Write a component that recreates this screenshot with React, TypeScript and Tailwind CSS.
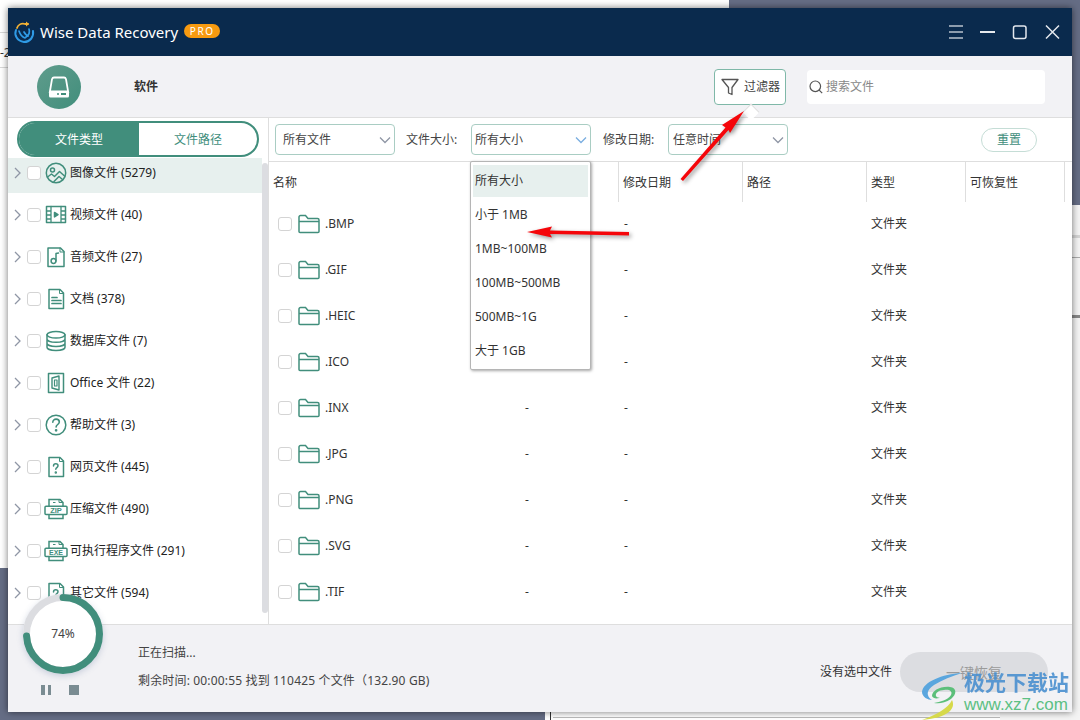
import React from "react";

const G = "#418e7c";

function Svg({ children, w = 22, h = 22, vb = "0 0 22 22" }: { children: React.ReactNode; w?: number; h?: number; vb?: string }) {
  return (
    <svg width={w} height={h} viewBox={vb} fill="none" stroke={G} strokeWidth={1.5} strokeLinecap="round" strokeLinejoin="round" className="shrink-0">
      {children}
    </svg>
  );
}

const Doc = ({ children }: { children?: React.ReactNode }) => (
  <>
    <path d="M4 1.5h11l3.5 3.5v15.5H4z" />
    <path d="M14.5 1.5v4h4" strokeWidth={1} />
    {children}
  </>
);

const icons: Record<string, React.ReactNode> = {
  image: (
    <Svg>
      <circle cx="11" cy="11" r="9.7" />
      <circle cx="7.5" cy="8" r="2" />
      <path d="M2.5 15l4-3 3 2.5 5-5 5 4.5M9 19.5l5-5 3.5 3" />
    </Svg>
  ),
  video: (
    <Svg>
      <rect x="1.5" y="2.5" width="19" height="16" />
      <path d="M6 2.5v16M16 2.5v16M1.5 7h4.5M1.5 11h4.5M1.5 15h4.5M16 7h4.5M16 11h4.5M16 15h4.5" strokeWidth={1.3} />
      <path d="M9.5 8.5l3.5 2.2-3.5 2.2z" fill={G} />
    </Svg>
  ),
  audio: (
    <Svg>
      <path d="M3 2h12.5l3.5 3.5V20.5H3z" />
      <path d="M15 2v4h4" strokeWidth={1} />
      <circle cx="8.5" cy="15" r="2.4" />
      <path d="M11 15V7.5l2.5-.5" />
    </Svg>
  ),
  doc: (
    <Svg>
      <Doc>
        <path d="M7 9.5h5M7 12.5h9M7 15.5h9" strokeWidth={1.7} />
      </Doc>
    </Svg>
  ),
  db: (
    <Svg>
      <ellipse cx="11" cy="4.8" rx="9" ry="3.3" />
      <path d="M2 4.8v12.4c0 1.9 4 3.3 9 3.3s9-1.4 9-3.3V4.8M2 9c0 1.9 4 3.3 9 3.3S20 10.9 20 9M2 13.2c0 1.9 4 3.3 9 3.3s9-1.4 9-3.3" />
    </Svg>
  ),
  office: (
    <Svg>
      <path d="M3.5 1.5h15v19h-15z" />
      <path d="M7 6l7-2v14l-7-2z" strokeWidth={1.4} />
      <path d="M9.5 8h2.500v6H9.500z" strokeWidth={1.2} />
    </Svg>
  ),
  help: (
    <Svg>
      <circle cx="11" cy="11" r="9.8" />
      <path d="M7.8 8.3c0-1.900 1.500-3.200 3.300-3.200s3.200 1.200 3.200 2.900c0 2.400-3.200 2.600-3.200 5" strokeWidth={1.6} />
      <circle cx="11.1" cy="16.3" r=".6" fill={G} />
    </Svg>
  ),
  web: (
    <Svg>
      <Doc>
        <path d="M8.5 10c0-1.400 1-2.200 2.300-2.200s2.200.9 2.200 2c0 1.700-2.200 1.800-2.200 3.400" />
        <circle cx="10.8" cy="16.4" r=".5" fill={G} />
      </Doc>
    </Svg>
  ),
  zip: (
    <svg width="24" height="22" viewBox="0 0 24 22" fill="none" stroke={G} strokeWidth={1.5} className="shrink-0">
      <path d="M5 8V1.500h11l3 3V8M5 16.500v4h14v-4" />
      <path d="M9 4.500h2.500M15 1.500v3h4" strokeWidth={1} />
      <rect x="1" y="8.200" width="22" height="8.300" rx="1" />
      <text x="12" y="15" textAnchor="middle" fontSize="7.5" fontWeight="700" fill={G} stroke="none" fontFamily="'Liberation Sans',sans-serif">ZIP</text>
    </svg>
  ),
  exe: (
    <svg width="24" height="22" viewBox="0 0 24 22" fill="none" stroke={G} strokeWidth={1.5} className="shrink-0">
      <path d="M5 8V1.500h11l3 3V8M5 16.500v4h14v-4" />
      <path d="M9 4.500h2.500M15 1.500v3h4" strokeWidth={1} />
      <rect x="1" y="8.200" width="22" height="8.300" rx="1" />
      <text x="12" y="15" textAnchor="middle" fontSize="7" fontWeight="700" fill={G} stroke="none" fontFamily="'Liberation Sans',sans-serif">EXE</text>
    </svg>
  ),
};

const sideItems = [
  ["image", "图像文件 (5279)"],
  ["video", "视频文件 (40)"],
  ["audio", "音频文件 (27)"],
  ["doc", "文档 (378)"],
  ["db", "数据库文件 (7)"],
  ["office", "Office 文件 (22)"],
  ["help", "帮助文件 (3)"],
  ["web", "网页文件 (445)"],
  ["zip", "压缩文件 (490)"],
  ["exe", "可执行程序文件 (291)"],
  ["web", "其它文件 (594)"],
];

const rowsData = [".BMP", ".GIF", ".HEIC", ".ICO", ".INX", ".JPG", ".PNG", ".SVG", ".TIF"];
const sizes = ["所有大小", "小于 1MB", "1MB~100MB", "100MB~500MB", "500MB~1G", "大于 1GB"];

function Chevron({ color = "#8f96a5", size = 12 }: { color?: string; size?: number }) {
  return (
    <svg width={size} height={size} viewBox="0 0 12 12" fill="none" stroke={color} strokeWidth={1.3} className="shrink-0">
      <path d="M1 3.500l5 5 5-5" />
    </svg>
  );
}

function Select({ label, pad, chevron }: { label: string; pad: string; chevron?: string }) {
  return (
    <div className={`${pad} w-[120px] h-[31px] flex items-center justify-between pr-[3px] bg-white rounded-[4px] border border-[#a9cdc3] text-[#444]`}>
      <span>{label}</span>
      <Chevron color={chevron} />
    </div>
  );
}

function Check() {
  return <span className="block w-[14px] h-[14px] shrink-0 rounded-[3px] border border-[#d4d4d4] bg-white" />;
}

export default function App() {
  return (
    <div className="relative w-[1080px] h-[720px] overflow-hidden bg-[#656d85] p-2 font-['Noto_Sans','Noto_Sans_CJK_SC',sans-serif] text-[12px] text-[#222]">
      {/* desktop windows behind */}
      <div className="absolute left-0 top-0 w-[729px] h-[568px] bg-white">
        <div className="absolute left-0 top-[32px] w-full h-px bg-[#d8d8d8]" />
        <div className="absolute left-0 top-[67px] w-full h-px bg-[#d8d8d8]" />
        <span className="absolute left-0 top-[44px] text-[#333]">-2</span>
      </div>
      <div className="absolute left-[545px] top-[600px] w-[535px] h-[120px] bg-white">
        <div className="absolute left-[5px] top-[100px] h-[20px] w-px bg-[#333]" />
        <div className="absolute left-[8px] top-[117px] w-full h-px bg-[#bbb]" />
      </div>
      <div className="absolute left-[1000px] top-[205px] w-[80px] h-[520px] bg-[#f4f4f4]">
        <div className="absolute left-0 top-[30px] w-full h-[3px] bg-[#d4d4d4]" />
        <div className="absolute left-0 top-[52px] w-full h-px bg-[#aaa]" />
        <div className="absolute left-0 top-[110px] w-full h-[3px] bg-[#888]" />
      </div>

      {/* app window */}
      <div className="relative flex flex-col w-[1064px] h-[704px] bg-white shadow-[0_0_7px_rgba(0,0,0,0.55)]">
        {/* title bar */}
        <header className="flex items-center h-[48px] bg-[#0a2a4d] text-white shrink-0">
          <svg width="22" height="24" viewBox="0 0 22 24" fill="none" className="ml-[5px] shrink-0" strokeLinecap="round">
            <path d="M3 10c-2 5 1 11 8 12 6 0 10-5 9-11" stroke="#2f9be6" strokeWidth="2" />
            <path d="M6 11c1 3 3 6 6 7M11 12c1 2 2 3 4 4M16 9c1 3 0 6-3 8" stroke="#2f9be6" strokeWidth="1.7" />
            <path d="M4 8c1-3 4-5 8-4h3" stroke="#f5b335" strokeWidth="1.8" />
            <path d="M13 1.500l3 2.500-3 2.500z" fill="#f5b335" />
          </svg>
          <span className="ml-[5px] text-[15px] leading-none">Wise Data Recovery</span>
          <span className="ml-[6px] w-[36px] h-[14px] -mt-[3px] flex items-center justify-center rounded-full bg-[#f79a10] text-[10px] tracking-[1.5px] leading-none">PRO</span>
          <div className="flex-1" />
          <svg width="112" height="16" viewBox="0 0 112 16" fill="none" stroke="#e4e8ee" strokeWidth="1.5" className="mr-[11px] shrink-0">
            <path d="M0 2h14M0 8h14M0 14h14" stroke="#b9c2cd" />
            <path d="M31 8h15" stroke="#fff" strokeWidth="1.8" />
            <rect x="64.5" y="2" width="12.5" height="12.5" rx="2" />
            <path d="M97 1.500l13 13M110 1.500l-13 13" />
          </svg>
        </header>

        {/* toolbar */}
        <div className="flex items-center h-[62px] shrink-0 bg-[#f2f2f5] border-b border-[#dedede]">
          <div className="ml-[29px] w-[44px] h-[44px] rounded-full flex items-center justify-center bg-gradient-to-br from-[#5f9c8c] to-[#418e7c]">
            <svg width="24" height="24" viewBox="0 0 24 24" className="shrink-0">
              <path d="M7 2.500h10c1 0 1.700.7 2 1.700l2.200 13H2.800L5 4.200c.3-1 1-1.700 2-1.700z" fill="none" stroke="#fff" strokeWidth="1.800" />
              <rect x="2" y="15.500" width="20" height="7" rx="1.500" fill="#fff" />
              <circle cx="11" cy="19" r="1" fill="#418e7c" />
              <rect x="14" y="18" width="5" height="2" fill="#418e7c" />
            </svg>
          </div>
          <span className="ml-[53px] pt-px font-bold text-[#333]">软件</span>
          <div className="flex-1" />
          <div className="relative flex items-center w-[72px] h-[36px] bg-white rounded-[4px] border border-[#7fb8a8]">
            <svg width="18" height="18" viewBox="0 0 18 18" fill="none" stroke="#555" strokeWidth="1.300" strokeLinejoin="round" className="ml-[6px] shrink-0">
              <path d="M1 1.500h16L11 9.500v7l-3.500-1.500V9.500z" />
            </svg>
            <span className="ml-[5px] pt-px text-[#444]">过滤器</span>
            <span className="absolute left-[30px] top-[36px] w-[12px] h-[12px] rotate-45 bg-white border-l border-t border-[#dedede]" />
          </div>
          <div className="ml-[21px] mr-[27px] flex items-center w-[238px] h-[34px] bg-white rounded-[4px] text-[#888]">
            <svg width="14" height="14" viewBox="0 0 14 14" fill="none" stroke="#555" strokeWidth="1.200" className="ml-[2px] shrink-0">
              <circle cx="6.300" cy="6.300" r="5.300" />
              <path d="M10.200 10.200l3 3" />
            </svg>
            <span className="ml-[3px] pt-px">搜索文件</span>
          </div>
        </div>

        {/* main */}
        <div className="flex flex-1 min-h-0">
          {/* sidebar */}
          <aside className="relative w-[261px] shrink-0 border-r border-[#dedede] overflow-hidden">
            <div className="flex h-[36px] mt-[3px] mx-[9px] w-[242px] rounded-full border-2 border-[#418e7c] overflow-hidden">
              <div className="w-[120px] pt-px flex items-center justify-center bg-[#418e7c] text-white">文件类型</div>
              <div className="flex-1 pt-px flex items-center justify-center text-[#418e7c]">文件路径</div>
            </div>
            <div className="flex mt-px">
              <ul className="w-[254px]">
                {sideItems.map(([ic, label], i) => (
                  <li key={label} className={i === 0 ? "flex items-center h-[35px] pb-[5px] mb-px pl-[6px] bg-[#e7f0ee]" : "flex items-center h-[42px] pl-[6px]"}>
                    <svg width="8" height="12" viewBox="0 0 8 12" fill="none" stroke="#8f96a5" strokeWidth="1.300" className="shrink-0">
                      <path d="M1 1l5 5-5 5" />
                    </svg>
                    <span className="ml-[5px]"><Check /></span>
                    <span className="ml-[4px] flex w-[22px] justify-center">{icons[ic]}</span>
                    <span className="ml-[3px] whitespace-nowrap">{label}</span>
                  </li>
                ))}
              </ul>
              <div className="w-[6px] h-[450px] mt-[5px] rounded-full bg-[#dcdde1]" />
            </div>
          </aside>

          {/* content */}
          <section className="relative flex-1 min-w-0">
            <div className="flex items-center h-[44px] border-b border-[#dedede] pl-[6px]">
              <Select label="所有文件" pad="pl-[7px]" />
              <span className="ml-[11px] w-[65px] text-[#444]">文件大小:</span>
              <Select label="所有大小" pad="pl-[3px]" chevron="#7aaee0" />
              <span className="ml-[12px] w-[65px] text-[#444]">修改日期:</span>
              <Select label="任意时间" pad="pl-[4px]" />
              <div className="ml-[193px] w-[56px] h-[24px] flex items-center justify-center rounded-full bg-white border border-[#c5ddd6] text-[#418e7c]">重置</div>
            </div>

            <div className="grid grid-cols-[201px_149px_124px_124px_99px_99px] h-[40px] items-stretch text-[#333]">
              <div className="flex items-center pl-[4px] pt-px">名称</div>
              <div className="border-r border-[#dedede]" />
              {["修改日期", "路径", "类型", "可恢复性"].map((h) => (
                <div key={h} className="flex items-center pl-[4px] pt-px border-r border-[#dedede]">{h}</div>
              ))}
            </div>

            {rowsData.map((name) => (
              <div key={name} className="grid grid-cols-[201px_149px_124px_124px_99px_99px] h-[46px] pb-[2px] items-center text-[#333]">
                <div className="flex items-center pl-[9px]">
                  <Check />
                  <svg width="22" height="20" viewBox="0 0 22 20" fill="none" stroke={G} strokeWidth="1.500" className="ml-[6px] shrink-0">
                    <path d="M1 3a1.500 1.500 0 0 1 1.500-1.500h5L10 4.500h9.500A1.500 1.500 0 0 1 21 6v11.500a1 1 0 0 1-1 1H2a1 1 0 0 1-1-1z" />
                    <path d="M1 7.500h20" />
                  </svg>
                  <span className="ml-[5px]">{name}</span>
                </div>
                <div className="pl-[55px]">-</div>
                <div className="pl-[5px]">-</div>
                <div />
                <div className="pl-[4px]">文件夹</div>
                <div />
              </div>
            ))}

            {/* dropdown */}
            <div className="absolute left-[201px] top-[43px] w-[121px] h-[209px] p-[2px] pt-[3px] bg-white border border-[#b5b5b5] rounded-[2px] shadow-[1px_1px_3px_rgba(0,0,0,0.35)] text-[#333]">
              {sizes.map((s, i) => (
                <div key={s} className={i === 0 ? "flex items-center h-[32px] mb-[2px] pl-[2px] bg-[#e7f0ee]" : "flex items-center h-[32px] mb-[2px] pl-[2px]"}>{s}</div>
              ))}
            </div>
          </section>
        </div>

        {/* footer */}
        <footer className="relative flex items-center h-[88px] shrink-0 bg-[#f2f2f5] border-t border-[#dedede] text-[#444]">
          <div className="absolute left-[15px] top-[-31px] w-[80px] h-[80px] flex items-center justify-center rounded-full bg-white shadow-[0_2px_6px_rgba(100,120,160,0.3)]">
            <svg width="80" height="80" viewBox="0 0 80 80" fill="none" strokeWidth="7" className="absolute left-0 top-0">
              <circle cx="40" cy="40" r="36.500" stroke="#dcdde1" />
              <circle cx="40" cy="40" r="36.500" stroke={G} strokeDasharray="169.700 229.300" strokeLinecap="round" transform="rotate(-90 40 40)" />
            </svg>
            <span className="relative text-[#444]">74%</span>
          </div>
          <div className="absolute left-[33px] top-[60px] flex items-center">
            <span className="block w-[3.500px] h-[10px] bg-[#7a8c92]" />
            <span className="block ml-[3px] w-[3.500px] h-[10px] bg-[#7a8c92]" />
            <span className="block ml-[18px] w-[10px] h-[10px] bg-[#7a8c92]" />
          </div>
          <div className="ml-[130px] flex flex-col gap-[11px] mt-[-4px]">
            <span className="leading-[17px]">正在扫描...</span>
            <span className="leading-[17px] tracking-[0.16px]">剩余时间: 00:00:55 找到 110425 个文件（132.90 GB)</span>
          </div>
          <div className="flex-1" />
          <span className="text-[#333] mt-[7px]">没有选中文件</span>
          <div className="ml-[8px] mr-[24px] mt-[7px] w-[148px] h-[40px] flex items-center justify-center rounded-[20px] bg-[#dcdde1] text-[14px] text-[#9a9a9a]">一键恢复</div>
        </footer>
      </div>

      {/* annotation arrows */}
      <svg width="1080" height="720" viewBox="0 0 1080 720" className="absolute left-0 top-0 pointer-events-none drop-shadow-[2px_2px_2px_rgba(0,0,0,0.4)]">
        <path d="M744 111L722 125L725.500 127.500L680.500 179L683 181L728.500 130L730 133z" fill="#f5060a" />
        <path d="M527 232L552 226.500L550 230.500L629 232L629 235.500L550 234L552 237.500z" fill="#f5060a" />
      </svg>

      {/* watermark */}
      <div className="absolute left-[920px] top-[670px] flex pointer-events-none">
        <svg width="46" height="50" viewBox="0 0 46 50" fill="none" strokeLinecap="round" className="shrink-0">
          <path d="M42 3C22 4 3 12 2 22c0 5 6 8 10 8C6 26 6 20 14 15 22 10 32 6 42 3z" fill="#5aa6de" />
          <path d="M12 26c0-5 8-10 18-9 7 1 7 7 1 12-6 4-12 5-17 4 6-1 14-3 17-8 2-4-2-6-7-5-5 0-9 3-8 6 1 2 4 2 6 1-4 2-9 2-10-1z" fill="#5cbf7a" />
          <path d="M32 30C28 38 18 44 2 50c10-1 22-3 28-9 3-3 4-7 2-11z" fill="#d6d94a" />
        </svg>
        <div className="ml-[-2px] flex flex-col">
          <span className="text-[21px] leading-[24px] font-bold text-[#4a90d0] whitespace-nowrap opacity-90">极光下载站</span>
          <span className="mt-[1px] text-[17px] leading-[20px] text-[#5cc083] whitespace-nowrap font-['Liberation_Sans',sans-serif]">www.xz7.com</span>
        </div>
      </div>
    </div>
  );
}
